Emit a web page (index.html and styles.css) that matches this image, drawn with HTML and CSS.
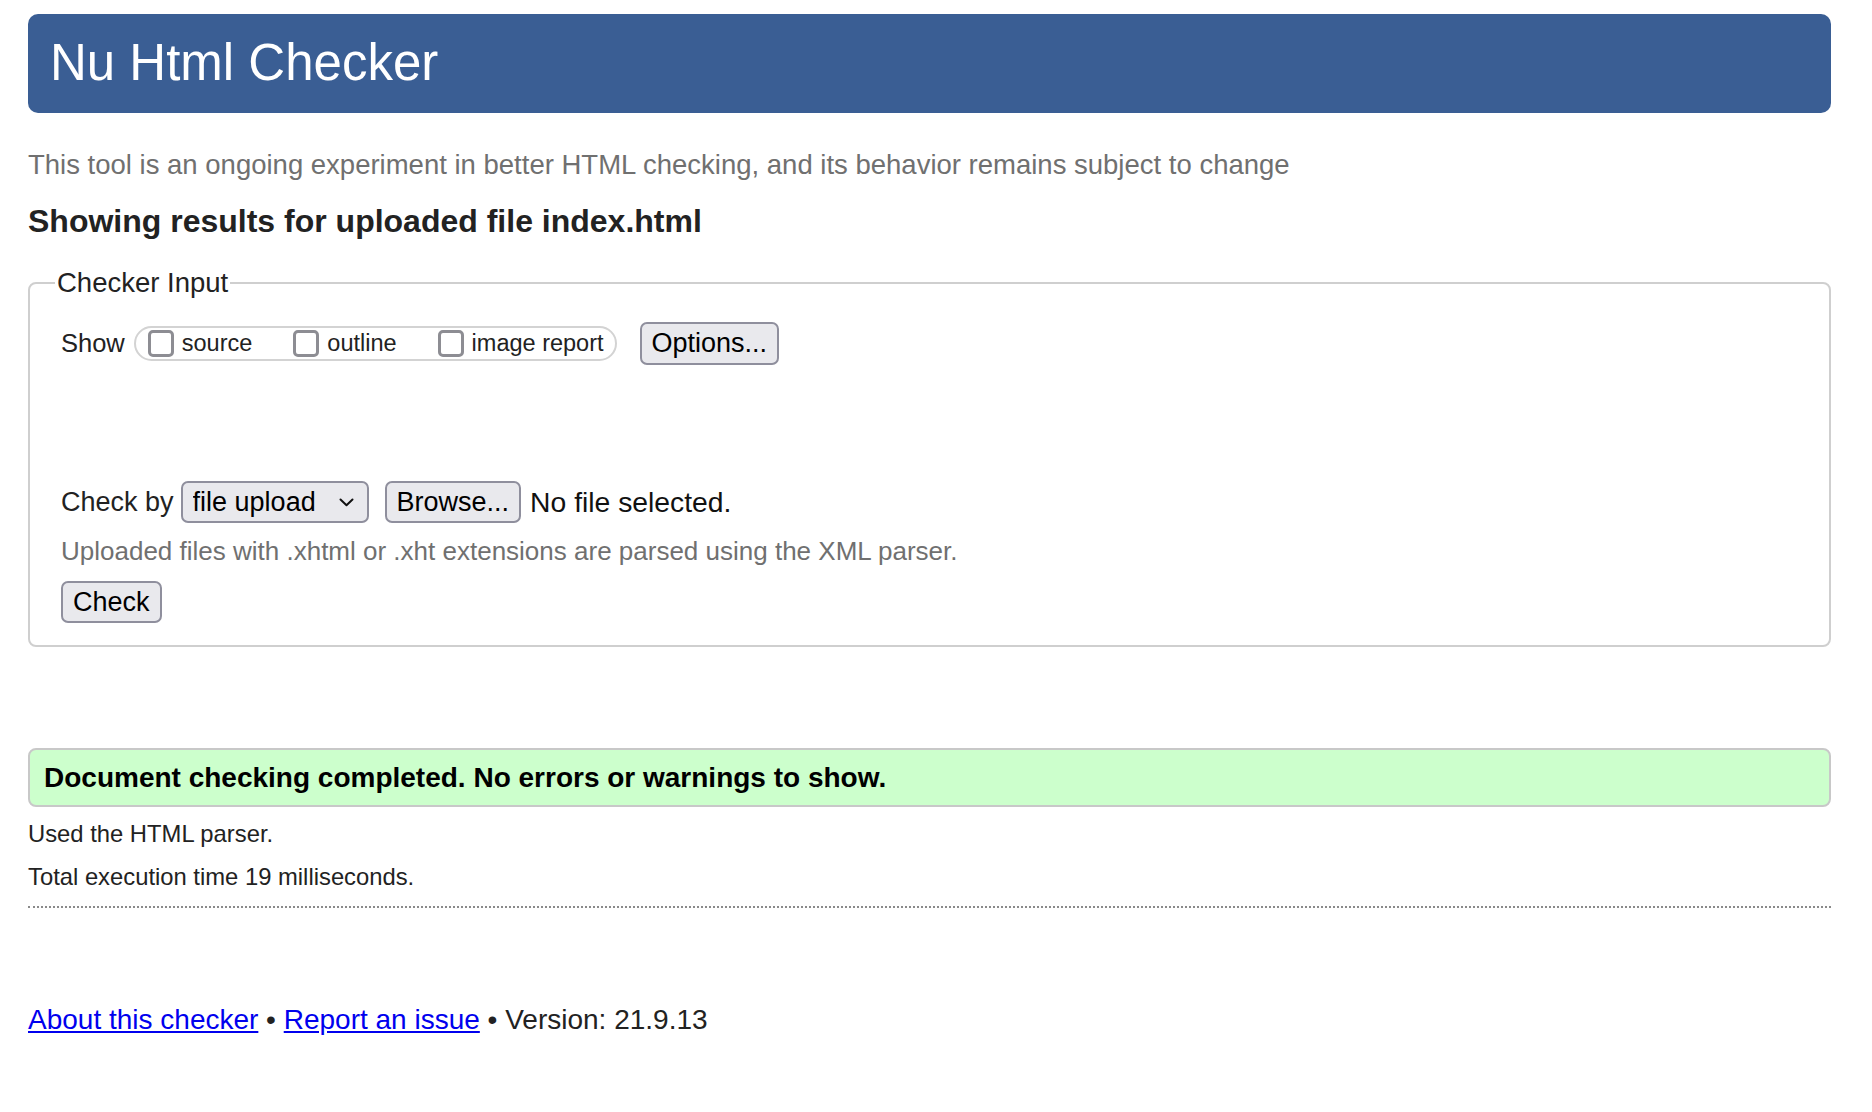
FILE: index.html
```html
<!DOCTYPE html>
<html lang="en">
<head>
<meta charset="utf-8">
<title>Showing results for uploaded file index.html - Nu Html Checker</title>
<link rel="stylesheet" href="styles.css">
</head>
<body>
<h1 class="title">Nu Html Checker</h1>
<p class="intro">This tool is an ongoing experiment in better HTML checking, and its behavior remains subject to change</p>
<h2 class="results-heading">Showing results for uploaded file index.html</h2>
<form class="checker-form">
  <fieldset class="checker-input">
    <legend class="checker-legend">Checker Input</legend>
    <div class="show-row">
      <span class="row-label show-label">Show</span>
      <div class="show-options">
        <label class="show-option"><input type="checkbox" class="cb"><span>source</span></label>
        <label class="show-option"><input type="checkbox" class="cb"><span>outline</span></label>
        <label class="show-option"><input type="checkbox" class="cb"><span>image report</span></label>
      </div>
      <button type="button" class="btn options-btn">Options...</button>
    </div>
    <div class="options-space"></div>
    <div class="checkby-row">
      <span class="row-label checkby-label">Check by</span>
      <span class="select-wrap">
        <select class="select"><option>file upload</option></select>
        <svg class="chevron" width="15" height="9" viewBox="0 0 15 9" aria-hidden="true"><path d="M1.5 1.5 L7.5 7.2 L13.5 1.5" fill="none" stroke="#111" stroke-width="2" stroke-linecap="round" stroke-linejoin="round"/></svg>
      </span>
      <button type="button" class="btn browse-btn">Browse...</button>
      <span class="file-status">No file selected.</span>
    </div>
    <p class="upload-note">Uploaded files with .xhtml or .xht extensions are parsed using the XML parser.</p>
    <button type="button" class="btn check-btn">Check</button>
  </fieldset>
</form>
<div class="success">Document checking completed. No errors or warnings to show.</div>
<p class="details">Used the HTML parser.</p>
<p class="details">Total execution time 19 milliseconds.</p>
<hr class="divider">
<p class="footer"><a href="#">About this checker</a> • <a href="#">Report an issue</a> • Version: 21.9.13</p>
</body>
</html>
```
FILE: styles.css
```css
html {
  background: #fff;
}

body {
  margin: 0;
  padding: 14px 41px 0 28px;
  font-family: "Liberation Sans", Arial, Helvetica, sans-serif;
  font-size: 27px;
  color: #222;
}

.title {
  margin: 0;
  padding: 19px 22px 21px;
  font-size: 51px;
  line-height: 59px;
  font-weight: normal;
  color: #fff;
  background: #3a5e94;
  border-radius: 10px;
}

.intro {
  margin: 36px 0 0;
  font-size: 27.5px;
  line-height: 32px;
  color: #707070;
}

.results-heading {
  margin: 21px 0 0;
  font-size: 32px;
  line-height: 38px;
  font-weight: bold;
  color: #222;
}

.checker-form {
  margin: 27px 0 0;
}

.checker-input {
  margin: 0;
  padding: 0 31px 22px;
  border: 2px solid #cfcfcf;
  border-radius: 8px;
  min-width: 0;
}

.checker-legend {
  margin-left: -6px;
  padding: 0 2px;
  font-size: 27.5px;
  line-height: 32px;
  color: #222;
}

.show-row {
  display: flex;
  align-items: center;
  height: 43px;
  margin-top: 23px;
}

.show-label {
  margin-right: 9px;
  font-size: 25.5px;
}

.show-options {
  display: flex;
  align-items: center;
  gap: 41px;
  box-sizing: border-box;
  height: 35px;
  padding: 0 11px 0 12px;
  border: 2px solid #d3d3d3;
  border-radius: 18px;
}

.show-option {
  display: flex;
  align-items: center;
  gap: 8px;
  font-size: 23.5px;
  color: #222;
}

.cb {
  appearance: none;
  -webkit-appearance: none;
  box-sizing: border-box;
  width: 26px;
  height: 27px;
  margin: 0;
  border: 3px solid #8d8d93;
  border-radius: 5px;
  background: #fff;
}

.btn {
  box-sizing: border-box;
  height: 42px;
  padding: 0 10px;
  font-family: inherit;
  font-size: 27px;
  color: #000;
  background: #e9e9ed;
  border: 2px solid #8f8f9d;
  border-radius: 7px;
}

.options-btn {
  height: 43px;
  margin-left: 23px;
}

.options-space {
  height: 116px;
}

.checkby-row {
  display: flex;
  align-items: center;
  height: 42px;
}

.checkby-label {
  margin-right: 7px;
}

.select-wrap {
  position: relative;
  display: inline-flex;
}

.select {
  appearance: none;
  -webkit-appearance: none;
  box-sizing: border-box;
  width: 188px;
  height: 42px;
  margin: 0;
  padding: 0 0 0 10px;
  font-family: inherit;
  font-size: 27px;
  color: #000;
  background: #e9e9ed;
  border: 2px solid #8f8f9d;
  border-radius: 7px;
}

.chevron {
  position: absolute;
  right: 15px;
  top: 17px;
  pointer-events: none;
}

.browse-btn {
  margin-left: 16px;
}

.file-status {
  margin-left: 9px;
  font-size: 28.3px;
  color: #111;
}

.upload-note {
  margin: 12px 0 0;
  font-size: 26px;
  line-height: 32px;
  color: #707070;
}

.check-btn {
  display: block;
  margin-top: 14px;
}

.success {
  margin-top: 101px;
  padding: 11px 14px;
  font-size: 28px;
  line-height: 33px;
  font-weight: bold;
  color: #000;
  background: #ccffcc;
  border: 2px solid #c8c8c8;
  border-radius: 8px;
}

.details {
  margin: 13px 0 0;
  font-size: 23.8px;
  line-height: 28px;
  color: #222;
}

.details + .details {
  margin-top: 15px;
}

.divider {
  height: 0;
  margin: 15px 0 0;
  border: 0;
  border-top: 2px dotted #8a8a8a;
}

.footer {
  margin: 96px 0 0;
  font-size: 28px;
  line-height: 32px;
  color: #222;
}

.footer a {
  color: #0000ee;
  text-decoration: underline;
}
```
